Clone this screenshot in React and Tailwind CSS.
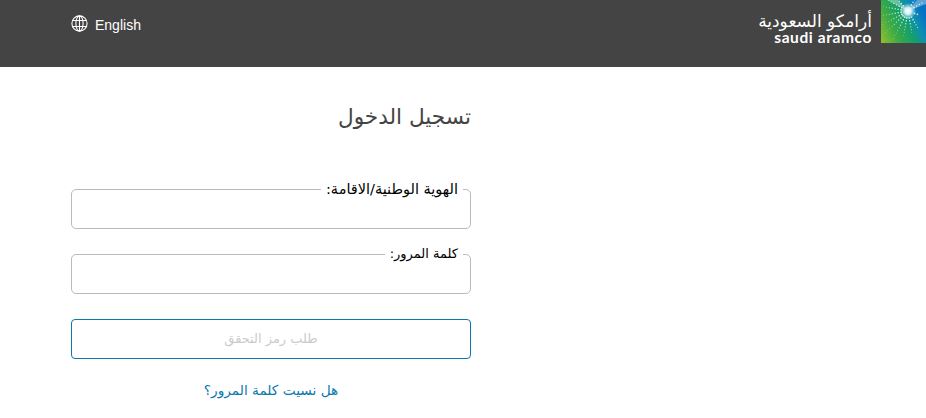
import React from "react";

function Globe() {
  return (
    <svg width="17" height="17" viewBox="0 0 17 17" fill="none" stroke="#fff" strokeWidth="1.1">
      <circle cx="8.5" cy="8.5" r="7.6" />
      <ellipse cx="8.5" cy="8.5" rx="3.6" ry="7.6" />
      <path d="M1.6 5.5h13.8M1.6 11.5h13.8M8.5 1v15" />
    </svg>
  );
}

function Sunburst() {
  const rays = [
    [-60, 14], [-30, 18], [100, 26], [118, 32], [136, 34], [152, 30], [170, 28], [190, 26], [208, 26], [228, 18], [60, 20], [80, 24], [20, 12],
  ];
  return (
    <svg width="45" height="43" viewBox="0 0 45 43" className="shrink-0 block">
      <defs>
        <linearGradient id="logoBg" x1="0" y1="0.85" x2="1" y2="0.4">
          <stop offset="0" stopColor="#84bd2e" />
          <stop offset="0.3" stopColor="#3aaa46" />
          <stop offset="0.58" stopColor="#14a06a" />
          <stop offset="0.78" stopColor="#0e8fb0" />
          <stop offset="1" stopColor="#0670c4" />
        </linearGradient>
        <radialGradient id="logoGlow">
          <stop offset="0" stopColor="#fff" />
          <stop offset="0.4" stopColor="#f0fbff" stopOpacity="0.9" />
          <stop offset="1" stopColor="#bfe8ff" stopOpacity="0" />
        </radialGradient>
      </defs>
      <rect width="45" height="43" fill="url(#logoBg)" />
      {rays.map(([angle, len], i) => {
        const dots = [];
        for (let d = 7; d < len; d += 3) {
          const a = (angle * Math.PI) / 180;
          dots.push(
            <circle
              key={d}
              cx={27 + Math.cos(a) * d}
              cy={11 + Math.sin(a) * d}
              r={Math.max(0.35, 1.1 - d / 34)}
              fill="#fff"
              opacity="0.8"
            />
          );
        }
        return <g key={i}>{dots}</g>;
      })}
      <path d="M6 0L27 11L17 0zM36 0L27 11L45 4V0z" fill="#fff" opacity="0.35" />
      <circle cx="27" cy="11" r="8" fill="url(#logoGlow)" />
    </svg>
  );
}

function Field({ label, size }) {
  return (
    <div className="relative h-10 rounded-[5px] border border-[#bbbbbb] bg-white">
      <label
        dir="rtl"
        className={`absolute -top-[9px] right-[7px] bg-white px-[5px] leading-4 text-black whitespace-nowrap ${size}`}
      >
        {label}
      </label>
      <input className="w-full h-full bg-transparent outline-none" type="text" />
    </div>
  );
}

export default function App() {
  return (
    <div className="h-[418px] overflow-hidden bg-white font-['DejaVu_Sans',sans-serif]">
      <header className="h-[67px] bg-[#444444] flex items-start justify-between pl-[71px]">
        <div className="flex items-start gap-[7px] pt-[15px] font-['Liberation_Sans',sans-serif] text-[14px] leading-5 text-white">
          <Globe />
          <span>English</span>
        </div>
        <div className="flex items-start gap-[9px]">
          <div className="flex flex-col items-end pt-[11px] text-white">
            <span dir="rtl" className="text-[17px] leading-[20px] whitespace-nowrap">أرامكو السعودية</span>
            <span className="font-['Lato',sans-serif] font-bold text-[15.5px] leading-[12px] tracking-[0.6px] whitespace-nowrap">saudi aramco</span>
          </div>
          <Sunburst />
        </div>
      </header>

      <main className="w-[400px] ml-[71px]" dir="rtl">
        <h1 className="pt-[33px] text-[21.6px] leading-[34px] font-normal text-[#444444]">تسجيل الدخول</h1>

        <form className="mt-[55px] flex flex-col">
          <Field label="الهوية الوطنية/الاقامة:" size="text-[14.5px]" />
          <div className="mt-[25px]">
            <Field label="كلمة المرور:" size="text-[13px]" />
          </div>
          <button
            type="button"
            className="mt-[25px] h-10 rounded-[4px] border border-[#0a78ad] bg-white text-[13px] text-[#cccccc]"
          >
            طلب رمز التحقق
          </button>
          <a className="mt-[21px] block text-center text-[13.7px] leading-5 text-[#0a78ad]">هل نسيت كلمة المرور؟</a>
        </form>
      </main>
    </div>
  );
}
